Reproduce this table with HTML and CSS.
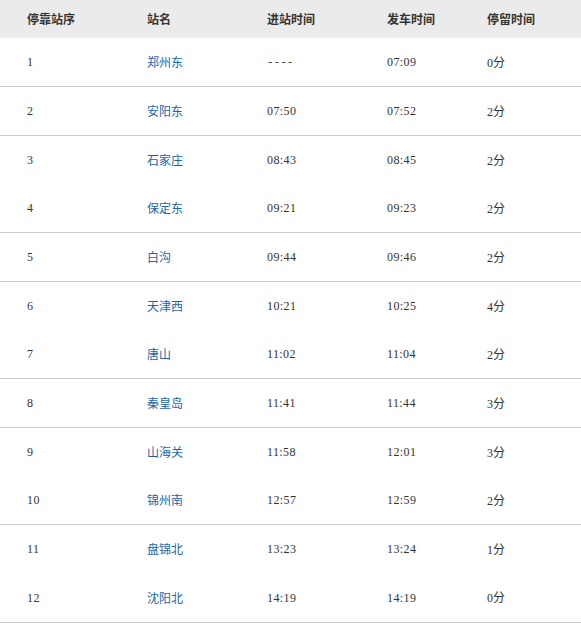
FILE: index.html
```html
<!DOCTYPE html>
<html lang="zh-CN">
<head>
<meta charset="utf-8">
<title>停靠站</title>
<link rel="stylesheet" href="styles.css">
</head>
<body>
<div class="table">
  <div class="row head">
    <div>停靠站序</div><div>站名</div><div>进站时间</div><div>发车时间</div><div>停留时间</div>
  </div>
  <div class="row b h48"><div class="num">1</div><div class="st">郑州东</div><div class="num dash">----</div><div class="num">07:09</div><div class="stay"><span class="num">0</span>分</div></div>
  <div class="row b h48"><div class="num">2</div><div class="st">安阳东</div><div class="num">07:50</div><div class="num">07:52</div><div class="stay"><span class="num">2</span>分</div></div>
  <div class="row h48"><div class="num">3</div><div class="st">石家庄</div><div class="num">08:43</div><div class="num">08:45</div><div class="stay"><span class="num">2</span>分</div></div>
  <div class="row b h48"><div class="num">4</div><div class="st">保定东</div><div class="num">09:21</div><div class="num">09:23</div><div class="stay"><span class="num">2</span>分</div></div>
  <div class="row b h48"><div class="num">5</div><div class="st">白沟</div><div class="num">09:44</div><div class="num">09:46</div><div class="stay"><span class="num">2</span>分</div></div>
  <div class="row h48"><div class="num">6</div><div class="st">天津西</div><div class="num">10:21</div><div class="num">10:25</div><div class="stay"><span class="num">4</span>分</div></div>
  <div class="row b h48"><div class="num">7</div><div class="st">唐山</div><div class="num">11:02</div><div class="num">11:04</div><div class="stay"><span class="num">2</span>分</div></div>
  <div class="row b h48"><div class="num">8</div><div class="st">秦皇岛</div><div class="num">11:41</div><div class="num">11:44</div><div class="stay"><span class="num">3</span>分</div></div>
  <div class="row h48"><div class="num">9</div><div class="st">山海关</div><div class="num">11:58</div><div class="num">12:01</div><div class="stay"><span class="num">3</span>分</div></div>
  <div class="row b h48"><div class="num">10</div><div class="st">锦州南</div><div class="num">12:57</div><div class="num">12:59</div><div class="stay"><span class="num">2</span>分</div></div>
  <div class="row h48"><div class="num">11</div><div class="st">盘锦北</div><div class="num">13:23</div><div class="num">13:24</div><div class="stay"><span class="num">1</span>分</div></div>
  <div class="row b h49"><div class="num">12</div><div class="st">沈阳北</div><div class="num">14:19</div><div class="num">14:19</div><div class="stay"><span class="num">0</span>分</div></div>
</div>
</body>
</html>
```

FILE: styles.css
```css
html, body {
  margin: 0;
  padding: 0;
  background: #ffffff;
}

body {
  font-family: "Noto Sans CJK SC", "Liberation Sans", sans-serif;
  font-size: 12px;
  color: #333333;
}

.table {
  width: 581px;
}

.row {
  display: grid;
  grid-template-columns: 120px 120px 120px 100px 1fr;
  align-items: center;
  padding-left: 27px;
  box-sizing: border-box;
}

.row > div {
  line-height: 16px;
  white-space: nowrap;
}

.head {
  height: 38px;
  background: #ebebeb;
  font-weight: bold;
  color: #333333;
}

.h48 {
  height: 48px;
}

.h49 {
  height: 49px;
}

.b {
  border-bottom: 1px solid #cdcdcd;
  box-sizing: content-box;
}

.num {
  font-family: "Liberation Serif", "Noto Sans CJK SC", serif;
  font-size: 12px;
  letter-spacing: 0.4px;
  color: #333333;
}

.dash {
  font-family: "Liberation Mono", monospace;
  font-size: 11px;
  letter-spacing: 0;
}

.stay .num {
  letter-spacing: 0;
}

.st {
  color: #1a66a8;
}
```
